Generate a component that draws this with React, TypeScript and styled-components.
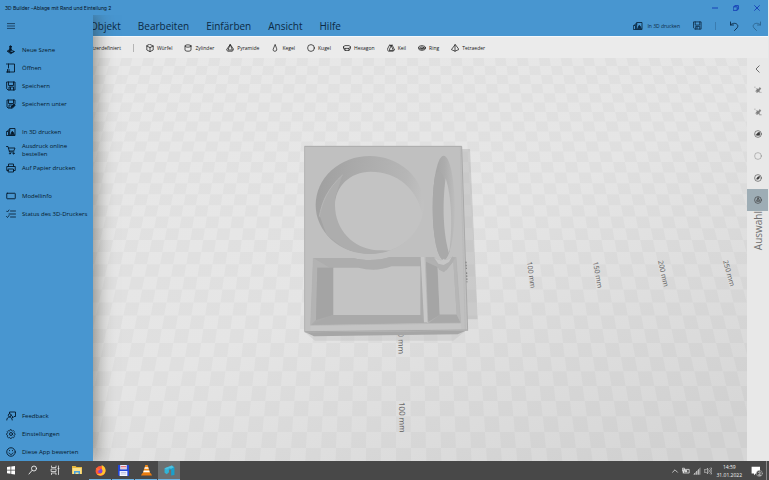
import React from "react";
import styled, { createGlobalStyle } from "styled-components";

const GlobalStyle = createGlobalStyle`
  * { box-sizing: border-box; }
  html, body, #root { height: 100%; margin: 0; }
  body { font-family: "Open Sans", "Noto Sans", sans-serif; background: #e8e8e8; overflow: hidden; }
  button, a { font: inherit; color: inherit; text-decoration: none; background: none; border: 0; padding: 0; margin: 0; }
  ul { list-style: none; margin: 0; padding: 0; }
`;

const blue = "#4896d0";
const ink = "#0c2a44";

const Desktop = styled.div`
  display: flex;
  flex-direction: column;
  height: 100vh;
`;
const AppWindow = styled.div`
  position: relative;
  flex: 1;
  min-height: 0;
  display: flex;
  flex-direction: column;
  margin-right: 1px;
`;
const TitleBar = styled.header`
  display: flex;
  align-items: center;
  justify-content: space-between;
  height: 15px;
  padding: 0 1px 0 5px;
  background: ${blue};
  color: #06121c;
`;
const Title = styled.h1`
  margin: 0;
  font-family: Inter, "Open Sans", sans-serif;
  font-size: 5px;
  line-height: 8px;
  font-weight: 400;
`;
const WindowButtons = styled.div`
  display: flex;
`;
const WindowButton = styled.button`
  display: grid;
  place-items: center;
  width: 21px;
  height: 15px;
  color: #1238b4;
`;
const MenuBar = styled.div`
  display: flex;
  align-items: center;
  justify-content: space-between;
  height: 22px;
  padding: 0 6px 0 90px;
  background: ${blue};
  border-bottom: 1px solid #f4f8fb;
  color: ${ink};
`;
const Menu = styled.nav`
  display: flex;
  gap: 17px;
`;
const MenuItem = styled.button`
  font-size: 10px;
  line-height: 16px;
`;
const Actions = styled.div`
  display: flex;
  align-items: center;
  gap: 13px;
`;
const ActionButton = styled.button<{ $faded?: boolean }>`
  display: flex;
  align-items: center;
  gap: 4px;
  font-size: 5px;
  line-height: 8px;
  opacity: ${(p) => (p.$faded ? 0.45 : 1)};
`;
const Divider = styled.span<{ $light?: boolean }>`
  width: 1px;
  height: 8px;
  background: ${(p) => (p.$light ? "#b4b4b4" : "#3a7cb0")};
`;
const Toolbar = styled.div`
  display: flex;
  align-items: center;
  gap: 12px;
  height: 21px;
  padding-left: 80px;
  background: #ebebeb;
  color: #161616;
`;
const Shape = styled.button`
  display: flex;
  align-items: center;
  gap: 3px;
  font-size: 5px;
  line-height: 8px;
`;
const Workspace = styled.main`
  flex: 1;
  min-height: 0;
  display: flex;
`;
const Scene = styled.svg`
  display: block;
  flex: 1;
  min-width: 0;
  height: 100%;
`;
const Rail = styled.aside`
  display: flex;
  flex-direction: column;
  align-items: center;
  width: 21px;
  background: #e8e8e8;
  color: #3a3a3a;
`;
const RailButton = styled.button<{ $active?: boolean }>`
  display: grid;
  place-items: center;
  width: 100%;
  height: 22px;
  background: ${(p) => (p.$active ? "#9eadb5" : "transparent")};
  &:first-child { height: 21px; }
`;
const RailTitle = styled.h2`
  margin: 0;
  writing-mode: vertical-rl;
  rotate: 180deg;
  font-size: 10px;
  line-height: 14px;
  font-weight: 400;
  color: #6f6f6f;
`;
const Drawer = styled.nav`
  position: absolute;
  top: 15px;
  bottom: 0;
  left: 0;
  width: 93px;
  display: flex;
  flex-direction: column;
  background: ${blue};
  color: #06182a;
  box-shadow: 2px 0 18px rgba(40, 40, 30, 0.55);
  clip-path: inset(0 -30px 0 0);
`;
const DrawerToggle = styled.button`
  display: grid;
  place-items: center;
  width: 22px;
  height: 22px;
`;
const DrawerGroup = styled.ul<{ $bottom?: boolean }>`
  margin-top: ${(p) => (p.$bottom ? "auto" : "10px")};
  &:first-of-type { margin-top: 4px; }
`;
const DrawerItem = styled.button`
  display: grid;
  grid-template-columns: 22px 1fr;
  align-items: center;
  width: 100%;
  height: 18px;
  font-size: 6px;
  line-height: 8px;
  text-align: left;
  svg { justify-self: center; }
`;
const Taskbar = styled.footer`
  display: flex;
  align-items: stretch;
  justify-content: space-between;
  height: 19px;
  background: #484848;
  color: #f2f2f2;
`;
const TaskGroup = styled.div`
  display: flex;
`;
const TaskButton = styled.button<{ $open?: boolean; $active?: boolean }>`
  display: grid;
  place-items: center;
  width: 22px;
  margin-left: ${(p) => (p.$open ? "1px" : "0")};
  background: ${(p) => (p.$active ? "#6c6f70" : "transparent")};
  border-bottom: 1px solid ${(p) => (p.$open ? "#6fb4e4" : "transparent")};
`;
const Tray = styled.div`
  display: flex;
  align-items: center;
  gap: 3px;
  padding-right: 1px;
`;
const TrayButton = styled.button`
  display: grid;
  place-items: center;
`;
const Clock = styled.time`
  margin: 0 6px 0 2px;
  font-size: 5px;
  line-height: 8px;
  text-align: center;
`;
const ShowDesktop = styled.button`
  width: 2px;
  height: 19px;
  border-left: 1px solid #8a8a8a;
`;

const Glyph = ({ size = 10, children }: { size?: number; children: React.ReactNode }) => (
  <svg width={size} height={size} viewBox="0 0 20 20" fill="none" stroke="currentColor" strokeWidth="1.8" strokeLinecap="round" strokeLinejoin="round" aria-hidden="true">
    {children}
  </svg>
);

const print3d = <><path d="M8 3h10v14H8zM1.500 9H5v8H1.500zM4 9V6h4M5 17h3" /><path d="M9.500 15.500 12 9l2 1 2.500 5.500z" fill="currentColor" /></>;
const floppy = <><path d="M2 2h16v16H4l-2-2zM5 2v7h10V2M6 18v-6h9v6M9 13v4" /></>;

const drawerGroups = [
  [
    { label: "Neue Szene", icon: <><circle cx="9" cy="3.500" r="1.800" fill="currentColor" /><path d="M9 4l2 6H7zM3 12l6-2 8 3-7 4z" fill="currentColor" /><path d="M10 12.500h3" stroke={blue} /></> },
    { label: "Öffnen", icon: <path d="M5 2h12v16H6M5 2v8M3 18H1M3 2H1M3 18h4M3 13v5M6 18v-5" /> },
    { label: "Speichern", icon: floppy },
    { label: "Speichern unter", icon: <><path d="M9 18H4l-2-2V2h16v7M5 2v7h10V2M6 18v-6h5" /><path d="m10 18 1-4 5-4 2.500 2.500L14 17z" fill="currentColor" /></> },
  ],
  [
    { label: "In 3D drucken", icon: print3d },
    { label: "Ausdruck online bestellen", icon: <><path d="M1 3h3l3 11h9M5 6h13l-2.500 6H7" /><circle cx="8" cy="17" r="1.200" /><circle cx="15" cy="17" r="1.200" /></> },
    { label: "Auf Papier drucken", icon: <path d="M5 7V2h10v5M5 15H1.500V7h17v8H15M5 12h10v6H5z" /> },
  ],
  [
    { label: "Modellinfo", icon: <rect x="1.500" y="4.500" width="17" height="11" rx="1" /> },
    { label: "Status des 3D-Druckers", icon: <path d="m1 4 2 2 3-4M9 4h10M6 10h13M9 16h10M1 15l2 2 3-4" strokeWidth="1.600" /> },
  ],
];
const drawerFooter = [
  { label: "Feedback", icon: <><path d="M7 5V2h12v9h-3l-3 3v-3" /><circle cx="7.500" cy="8.500" r="3" /><path d="M1.500 18c0-8 11-8 11 0" /></> },
  { label: "Einstellungen", icon: <><circle cx="10" cy="10" r="3" /><path d="m8.500 1.500-.6 2-1.700.7-1.900-.9-1.900 2 .9 1.900-.7 1.600-1.600.6v2l1.700.7.7 1.700-.9 1.900 2 1.900 1.900-.9 1.600.7.600 1.600h2l.7-1.700 1.700-.7 1.900.9 1.900-2-.9-1.900.7-1.600 1.600-.6v-2l-1.700-.7-.7-1.700.9-1.900-2-1.900-1.900.9-1.600-.7-.6-1.600z" strokeWidth="1.500" /></> },
  { label: "Diese App bewerten", icon: <><circle cx="10" cy="10" r="8.500" /><path d="M6 12c2 4 6 4 8 0M7 7v.5M13 7v.5" /></> },
];

const shapes = [
  { label: "Würfel", icon: <path d="m10 1 8 4v10l-8 4-8-4V5zM2 5l8 4 8-4M10 9v10" /> },
  { label: "Zylinder", icon: <><ellipse cx="10" cy="5" rx="7.500" ry="3" /><path d="M2.500 5v10c0 4 15 4 15 0V5" /></> },
  { label: "Pyramide", icon: <path d="M10 2 1.500 14 4 18h12l2.500-4zM10 2 5 15h10z" /> },
  { label: "Kegel", icon: <path d="M10 2 5.500 13c-2 7 11 7 9 0z" /> },
  { label: "Kugel", icon: <circle cx="10" cy="10" r="8.500" /> },
  { label: "Hexagon", icon: <><path d="M1 7l4-3h10l4 3-4 4H5zM1 7v4l4 5h10l4-5V7M5 11v5M15 11v5" /></> },
  { label: "Keil", icon: <path d="M7 3h6l6 12-4 3H4l-3-3zM7 3l3 2 3-2M10 5 5 16h10z" /> },
  { label: "Ring", icon: <><ellipse cx="10" cy="10" rx="9" ry="6" /><ellipse cx="10" cy="9.500" rx="4.500" ry="2" /><path d="M2 9.500c3 5 13 5 16 0" /></> },
  { label: "Tetraeder", icon: <path d="M10 2 1 14l9 4 9-4zM10 2v16" /> },
];

const pin = <path d="m5 12 3-3-2-2 5 1 4-4 2 3-4 4v5l-2-3-3 3z" fill="currentColor" />;
const railTools = [
  { label: "Bereich einklappen", icon: <path d="M13 2 5 10l8 8" /> },
  { label: "Auswählen", icon: <g opacity=".6">{pin}<path d="M2 3h.5M17 16h.5" /></g> },
  { label: "Mehrere auswählen", icon: <g opacity=".6">{pin}<path d="M2 3h.5M14 17h4" /></g> },
  { label: "Alles auswählen", icon: <><circle cx="10" cy="10" r="8.500" strokeWidth="1.400" /><path d="m6 11 4-4 4-1v7H7z" fill="currentColor" /></> },
  { label: "Auswahl aufheben", icon: <circle cx="10" cy="10" r="8.500" opacity=".4" /> },
  { label: "Auswahl umkehren", icon: <><circle cx="10" cy="10" r="8.500" strokeWidth="1.400" /><path d="m7 12 2-4 5-2-2 6-4 1z" fill="currentColor" /></> },
  { label: "Ansichtsmodus", active: true, icon: <><circle cx="10" cy="10" r="8.500" strokeWidth="1.600" /><path d="m10 5-4 8h8zM10 5v8" strokeWidth="1.600" /></> },
];

/* Ground plane: a 10 mm checkerboard seen in perspective. */
const HORIZON = -1008;
const AXIS_X = 396;
const tileWidth = (y: number) => 0.0103 * (y - HORIZON);
const rowEdge = (k: number) => 1 / (1 / 1092 - k * 0.00000763) + HORIZON;
const tiles: string[] = [];
for (let k = -3; k < 32; k++) {
  const top = rowEdge(k);
  const bottom = rowEdge(k + 1);
  for (let i = -38; i < 36; i++) {
    if ((i + k) % 2 !== 0) continue;
    const x = (n: number, y: number) => (AXIS_X + n * tileWidth(y)).toFixed(1);
    tiles.push(`M${x(i, top)} ${top.toFixed(1)}L${x(i + 1, top)} ${top.toFixed(1)}L${x(i + 1, bottom)} ${bottom.toFixed(1)}L${x(i, bottom)} ${bottom.toFixed(1)}Z`);
  }
}
const groundPath = tiles.join("");

const rulerMarks = [
  { text: "100 mm", x: 527, y: 262, angle: 82, size: 7 },
  { text: "150 mm", x: 593, y: 262, angle: 80, size: 7 },
  { text: "200 mm", x: 658, y: 261, angle: 77, size: 7 },
  { text: "250 mm", x: 723, y: 261, angle: 74, size: 7 },
  { text: "50 mm", x: 398, y: 328, angle: 89, size: 8 },
  { text: "100 mm", x: 399, y: 402, angle: 89, size: 8 },
];

const ModelView = () => (
  <Scene viewBox="0 58 747 403" preserveAspectRatio="xMidYMid slice" role="img" aria-label="3D-Modell">
    <defs>
      <linearGradient id="ground" x1="0.2" y1="0" x2="1" y2="0.900">
        <stop offset="0" stopColor="#e8e8e8" />
        <stop offset="0.500" stopColor="#e5e5e5" />
        <stop offset="1" stopColor="#d6d6d6" />
      </linearGradient>
      <linearGradient id="wall" x1="0" y1="0.300" x2="1" y2="0.450">
        <stop offset="0" stopColor="#9f9f9f" />
        <stop offset="0.300" stopColor="#a9a9a9" />
        <stop offset="0.800" stopColor="#b6b6b6" />
        <stop offset="1" stopColor="#c2c2c2" />
      </linearGradient>
      <linearGradient id="slot" x1="0" y1="0" x2="1" y2="0">
        <stop offset="0" stopColor="#a3a3a3" />
        <stop offset="0.550" stopColor="#adadad" />
        <stop offset="1" stopColor="#bdbdbd" />
      </linearGradient>
      <clipPath id="bowl"><ellipse cx="239" cy="210" rx="162" ry="147" /></clipPath>
      <clipPath id="slit"><ellipse cx="461" cy="218" rx="33" ry="156" /></clipPath>
    </defs>
    <rect y="58" width="747" height="403" fill="url(#ground)" />
    <path d={groundPath} fill="#000" opacity=".024" />
    <g fill="#5c5c5c" fontFamily="Open Sans, sans-serif">
      {rulerMarks.map((m) => (
        <text key={m.text + m.x} fontSize={m.size} transform={`translate(${m.x} ${m.y}) rotate(${m.angle})`}>{m.text}</text>
      ))}
    </g>
    <g transform="translate(290 135) scale(.33333)">
      <path d="M500 42H540L563 553H525z" fill="#a8a8a8" opacity=".4" />
      <path d="M43 590 75 617H490L530 585z" fill="#bbb" opacity=".35" />
      <path d="M43 590 72 604 503 598 533 585z" fill="#a6a6a6" />
      <path d="M43 34H515L533 587 43 592z" fill="#c0c0c0" />
      <path d="M43 34H515L533 587" fill="none" stroke="#aaa" strokeWidth="3" />
      <path d="M511 36 526 586" stroke="#b6b6b6" strokeWidth="2" />
      <path d="M44 36V590" stroke="#b4b4b4" strokeWidth="3" />
      <path d="M45 590 532 585" stroke="#a9a9a9" strokeWidth="3" />
      <g clipPath="url(#bowl)">
        <rect x="75" y="60" width="330" height="300" fill="url(#wall)" />
        <path d="M158 118C115 160 90 200 90 245L110 300 170 345 240 360 300 350 230 335 150 270 135 190z" fill="#adadad" />
        <path d="M88 245C95 205 112 160 158 120" fill="none" stroke="#b6b6b6" strokeWidth="3" />
        <path d="M242 110C180 110 135 155 135 210C135 285 190 340 260 346L305 346 325 372 420 300 400 250C385 160 320 110 242 110z" fill="#c3c3c3" />
      </g>
      <g clipPath="url(#slit)">
        <rect x="427" y="60" width="68" height="316" fill="url(#slot)" />
        <path d="M437 118C447 102 460 112 464 140C455 210 458 290 480 350L466 380H420V140z" fill="#a9a9a9" />
        <path d="M467 130C456 210 460 300 477 355C487 290 487 190 467 130z" fill="#c5c5c5" />
      </g>
      <path d="M70 369H190C225 378 270 377 300 366H393L412 563 62 571z" fill="#ababab" />
      <path d="M70 369 120 398H205C240 407 270 406 305 394H390L393 366H300C270 377 225 378 190 369z" fill="#adadad" />
      <path d="M70 369 120 398H82L78 555 62 571z" fill="#b3b3b3" />
      <path d="M82 398H130V540L78 555z" fill="#a4a4a4" />
      <path d="M130 398H205C240 407 270 406 305 394H391V540H130z" fill="#c3c3c3" />
      <path d="M127 540H392L402 564 62 571z" fill="#a9a9a9" />
      <path d="M392 366H405L414 562H402z" fill="#c8c8c8" />
      <path d="M405 366 414 562" stroke="#b3b3b3" strokeWidth="2" />
      <path d="M407 366H433C447 388 470 385 483 366H498L512 563 414 563z" fill="#b1b1b1" />
      <path d="M408 380 442 396 449 540 415 560z" fill="#a5a5a5" />
      <path d="M443 398 449 538H500L490 378 470 406H455z" fill="#c0c0c0" />
      <path d="M433 366C443 378 455 376 462 370C469 378 480 374 488 364L494 376 462 412 447 404 440 382 412 372z" fill="#b0b0b0" />
      <path d="M431 366C445 376 455 379 461 372C469 378 479 373 487 363L477 381 461 390 445 386z" fill="#c6c6c6" />
      <path d="M449 540H500L512 564H416z" fill="#a8a8a8" />
      <path d="M490 378 498 366 512 563 500 538z" fill="#b6b6b6" />
      <path d="M62 571 512 564 514 582 62 587z" fill="#c4c4c4" />
      <path d="M70 369 62 571 512 564 498 366" fill="none" stroke="#b4b4b4" strokeWidth="2" />
      <path d="M528 380 529 402M530 412 531 442" stroke="#777" strokeWidth="3" strokeDasharray="5 4" />
    </g>
  </Scene>
);

const taskApps = [
  { label: "Start", icon: <path d="m2 4 7-1v6.500H2zM10.500 3 18 2v7.500h-7.500zM2 11h7v6.500l-7-1zM10.500 11H18v8l-7.500-1z" fill="#fff" stroke="none" /> },
  { label: "Suche", icon: <><circle cx="12" cy="7" r="5" /><path d="m8 11-6 7" /></> },
  { label: "Taskansicht", icon: <path d="M3 2v3h9V2M3 8h9v5H3zM3 19v-3h9v3M17 2v17M16 7h2" strokeWidth="1.500" /> },
  { label: "Explorer", icon: <g stroke="none"><path d="M0 2h7l2 2h11v14H0z" fill="#e8b83c" /><path d="M1 6h18v12H1z" fill="#fae08a" /><path d="M4 12h12v6h-3v-3H7v3H4z" fill="#4aa3dd" /></g> },
  { label: "Firefox", open: true, icon: <g stroke="none"><circle cx="10" cy="11" r="9" fill="#ff5a36" /><path d="M12 0c6 3 8 7 7 12-2 8-12 9-16 4 8 2 12-2 10-7z" fill="#ffc42e" /><circle cx="9.500" cy="11" r="4" fill="#8045d8" /><path d="M1 5l5 2 4 1-5 3z" fill="#ff7139" /></g> },
  { label: "Total Commander", open: true, icon: <g stroke="none"><path d="M0 0h20v20H2l-2-2z" fill="#2447d8" /><path d="M4 0h12v8H4z" fill="#e9ecf8" /><path d="M3 11h14v9H3z" fill="#f7f7ff" /><path d="M5 2h10v1H5zM5 5h10v1H5z" fill="#e34d55" /><path d="M5 13h10v1H5zM5 16h10v1H5z" fill="#8794c8" /></g> },
  { label: "VLC", open: true, icon: <g stroke="none"><path d="M8 0h4l5 16H3z" fill="#f18a18" /><path d="M7 4h6l1 3H6zM5 10h10l1 3H4z" fill="#fff" /><path d="M2 15h16l2 4H0z" fill="#ef7c0d" /></g> },
  { label: "3D Builder", open: true, active: true, icon: <g stroke="none"><path d="M1 6 9 3v10l-4 4-4-3z" fill="#31b4d8" /><path d="M9 3 15 1l4 3v14l-6 1V8L9 9z" fill="#19a0cb" /><path d="m1 6 13-5 4 3-5 3-4-1-4 2z" fill="#4fc0de" /></g> },
];

const App = () => (
  <Desktop>
    <GlobalStyle />
    <AppWindow>
      <TitleBar>
        <Title>3D Builder –Ablage mit Rand und Einteilung 2</Title>
        <WindowButtons>
          <WindowButton aria-label="Minimieren"><Glyph size={6}><path d="M1 10h18" strokeWidth="3" /></Glyph></WindowButton>
          <WindowButton aria-label="Verkleinern"><Glyph size={6}><path d="M2 6h12v12H2zM6 6V2h12v12h-4" strokeWidth="2.800" /></Glyph></WindowButton>
          <WindowButton aria-label="Schließen"><Glyph size={6}><path d="m2 2 16 16M18 2 2 18" strokeWidth="2.800" /></Glyph></WindowButton>
        </WindowButtons>
      </TitleBar>
      <MenuBar>
        <Menu>
          {["Objekt", "Bearbeiten", "Einfärben", "Ansicht", "Hilfe"].map((m) => <MenuItem key={m}>{m}</MenuItem>)}
        </Menu>
        <Actions>
          <ActionButton><Glyph>{print3d}</Glyph>In 3D drucken</ActionButton>
          <ActionButton aria-label="Speichern"><Glyph size={9}>{floppy}</Glyph></ActionButton>
          <Divider />
          <ActionButton aria-label="Rückgängig"><Glyph><path d="M3 2v6h6M3 8c7-8 19-1 13 6l-5 5" /></Glyph></ActionButton>
          <ActionButton aria-label="Wiederholen" $faded><Glyph><path d="M17 2v6h-6M17 8C10 0-2 7 4 14l5 5" /></Glyph></ActionButton>
        </Actions>
      </MenuBar>
      <Toolbar>
        <Shape>Benutzerdefiniert</Shape>
        <Divider $light />
        {shapes.map((s) => <Shape key={s.label}><Glyph size={8}>{s.icon}</Glyph>{s.label}</Shape>)}
      </Toolbar>
      <Workspace>
        <ModelView />
        <Rail>
          {railTools.map((t) => (
            <RailButton key={t.label} aria-label={t.label} $active={t.active}><Glyph size={8}>{t.icon}</Glyph></RailButton>
          ))}
          <RailTitle>Auswahl</RailTitle>
        </Rail>
      </Workspace>
      <Drawer>
        <DrawerToggle aria-label="Menü"><Glyph size={8}><path d="M1 4h18M1 10h18M1 16h18" strokeWidth="1.600" /></Glyph></DrawerToggle>
        {drawerGroups.map((group) => (
          <DrawerGroup key={group[0].label}>
            {group.map((d) => <li key={d.label}><DrawerItem><Glyph>{d.icon}</Glyph><span>{d.label}</span></DrawerItem></li>)}
          </DrawerGroup>
        ))}
        <DrawerGroup $bottom>
          {drawerFooter.map((d) => <li key={d.label}><DrawerItem><Glyph>{d.icon}</Glyph><span>{d.label}</span></DrawerItem></li>)}
        </DrawerGroup>
      </Drawer>
    </AppWindow>
    <Taskbar>
      <TaskGroup>
        {taskApps.map((t) => (
          <TaskButton key={t.label} aria-label={t.label} $open={t.open} $active={t.active}>
            <Glyph size={t.open ? 11 : 10}>{t.icon}</Glyph>
          </TaskButton>
        ))}
      </TaskGroup>
      <Tray>
        <TrayButton aria-label="Ausgeblendete Symbole"><Glyph size={8}><path d="m4 13 6-6 6 6" /></Glyph></TrayButton>
        <TrayButton aria-label="Akku"><Glyph size={8}><path d="M5 6h13v9H5zM1 4v6h5V4zM3 10v5" /><path d="M8 9h4v3H8z" fill="currentColor" /></Glyph></TrayButton>
        <TrayButton aria-label="Netzwerk"><Glyph size={8}><path d="M2 18 18 2v16z" fill="currentColor" opacity=".35" /><path d="M4 18v-2M9 18v-7M14 18V7" strokeWidth="1.400" /></Glyph></TrayButton>
        <TrayButton aria-label="Lautstärke"><Glyph size={8}><path d="M1 7h4l4-4v14l-4-4H1zM12 7c2 2 2 4 0 6M15 4c4 4 4 8 0 12M18 2c4 5 4 11 0 16" strokeWidth="1.400" /></Glyph></TrayButton>
        <Clock dateTime="2022-01-31T14:59">14:59<br />31.01.2022</Clock>
        <TrayButton aria-label="Benachrichtigungen">
          <Glyph size={12}><path d="M1 3h14v11H8l-3 3v-3H1z" fill="#fff" stroke="none" /><circle cx="14" cy="14" r="5" fill="#484848" stroke="#bbb" strokeWidth="1" /><path d="M12.500 12.500c1-2 4-.5 2.500 1.500l-2.500 3H16" strokeWidth="1.300" /></Glyph>
        </TrayButton>
        <ShowDesktop aria-label="Desktop anzeigen" />
      </Tray>
    </Taskbar>
  </Desktop>
);

export default App;
